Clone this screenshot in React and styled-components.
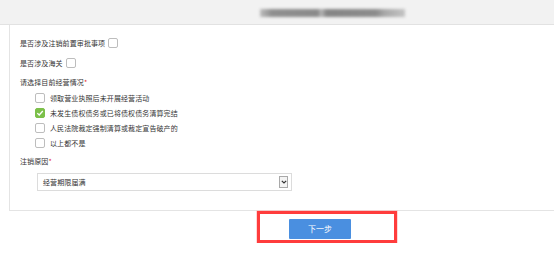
import React from 'react'
import styled, { createGlobalStyle } from 'styled-components'

const Global = createGlobalStyle`
  body {
    margin: 0;
    background: #fff;
    font-family: "Noto Sans CJK SC", "Noto Sans", sans-serif;
    color: #333;
  }
`

const TopBar = styled.div`
  height: 24px;
  background: #f2f2f2;
  border-bottom: 1px solid #e2e2e2;
  display: flex;
  align-items: center;
  padding-left: 260px;
`

const Blur = styled.div`
  width: 145px;
  height: 8px;
  margin-top: 2px;
  filter: blur(1.5px);
  background: linear-gradient(90deg, #bdbdbd 0%, #8f8f8f 8%, #8a8a8a 40%, #b8b8b8 42%, #858585 46%, #8c8c8c 80%, #a8a8a8 86%, #c4c4c4 100%);
`

const Panel = styled.div`
  margin-left: 9px;
  border-left: 1px solid #e4e4e4;
  border-bottom: 1px solid #e4e4e4;
  padding: 11px 0 19px 10px;
  font-size: 7px;
`

const Line = styled.div`
  display: flex;
  align-items: center;
  height: 14px;
  margin-top: ${p => p.$gap || 0}px;
`

const Label = styled.span`
  letter-spacing: 0.1px;
`

const Star = styled.span`
  color: #e52b2b;
  font-size: 7px;
`

const Box = styled.span`
  display: inline-flex;
  align-items: center;
  justify-content: center;
  box-sizing: border-box;
  width: 10px;
  height: 10px;
  border-radius: 2px;
  border: 1px solid ${p => (p.$checked ? '#7cc04a' : '#bdbdbd')};
  background: ${p => (p.$checked ? '#7cc04a' : '#fff')};
  margin: ${p => p.$margin};
`

const Options = styled.div`
  margin-top: 1px;
`

const Option = styled.div`
  display: flex;
  align-items: center;
  height: 15px;
  padding-left: 15px;
`

const Select = styled.div`
  margin: 5px 0 0 17px;
  width: 255px;
  height: 18px;
  box-sizing: border-box;
  border: 1px solid #dcdcdc;
  display: flex;
  align-items: center;
  justify-content: space-between;
  padding: 0 3px 0 5px;
`

const Arrow = styled.span`
  width: 9px;
  height: 12px;
  box-sizing: border-box;
  border: 1px solid #a9a9a9;
  background: #f4f4f4;
  display: flex;
  align-items: center;
  justify-content: center;
`

const Footer = styled.div`
  padding-left: 257px;
`

const Mark = styled.div`
  width: 140px;
  height: 32px;
  box-sizing: border-box;
  border: 3px solid #ff3c3c;
  box-shadow: 0 0 0 0.5px #ffb0b0;
  padding: 5px 0 0 29px;
`

const Button = styled.button`
  display: block;
  width: 62px;
  height: 20px;
  border: none;
  border-radius: 1px;
  background: #4a8fe0;
  color: #fff;
  font-family: "Noto Sans CJK SC", sans-serif;
  font-size: 8px;
  line-height: 20px;
  padding: 0;
`

const Check = () => (
  <svg width="8" height="8" viewBox="0 0 8 8">
    <path d="M1.3 4.1 L3.2 6 L6.8 2" fill="none" stroke="#fff" strokeWidth="1.3" />
  </svg>
)

const options = [
  { text: '领取营业执照后未开展经营活动' },
  { text: '未发生债权债务或已将债权债务清算完结', checked: true },
  { text: '人民法院裁定强制清算或裁定宣告破产的' },
  { text: '以上都不是' },
]

export default function App() {
  return (
    <>
      <Global />
      <TopBar>
        <Blur />
      </TopBar>
      <Panel>
        <Line>
          <Label>是否涉及注销前置审批事项</Label>
          <Box $margin="0 0 0 3px" />
        </Line>
        <Line $gap={6}>
          <Label>是否涉及海关</Label>
          <Box $margin="0 0 0 3px" />
        </Line>
        <Line $gap={5}>
          <Label>请选择目前经营情况</Label>
          <Star>*</Star>
        </Line>
        <Options>
          {options.map(o => (
            <Option key={o.text}>
              <Box $checked={o.checked} $margin="0 5px 0 0">
                {o.checked && <Check />}
              </Box>
              <Label>{o.text}</Label>
            </Option>
          ))}
        </Options>
        <Line $gap={4}>
          <Label>注销原因</Label>
          <Star>*</Star>
        </Line>
        <Select>
          <Label>经营期限届满</Label>
          <Arrow>
            <svg width="6" height="4" viewBox="0 0 6 4">
              <path d="M0.8 0.8 L3 3 L5.2 0.8" fill="none" stroke="#333" strokeWidth="1.2" />
            </svg>
          </Arrow>
        </Select>
      </Panel>
      <Footer>
        <Mark>
          <Button>下一步</Button>
        </Mark>
      </Footer>
    </>
  )
}
